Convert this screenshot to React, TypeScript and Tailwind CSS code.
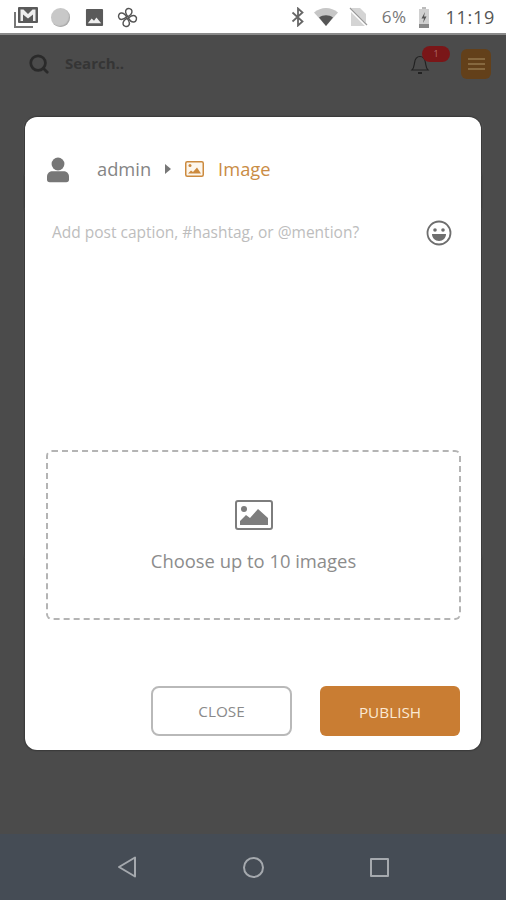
import { Search } from 'lucide-react'

function StatusIcons() {
  return (
    <div className="flex items-center gap-[12px] text-[#555]">
      <svg width="26" height="22" viewBox="0 0 26 22">
        <path d="M2 6v15h18" fill="none" stroke="#777" strokeWidth="2" />
        <rect x="5" y="1" width="20" height="16" rx="1" fill="#5a5a5a" />
        <path d="M7.500 15V3.500h3L15 8l4.500-4.500h3V15H20V8.500L15 12.500l-5-4V15z" fill="#eee" />
      </svg>
      <div className="w-[19px] h-[19px] rounded-full bg-[#c8c8c8] shadow-[inset_-1px_-1px_1px_#aaa]" />
      <svg width="19" height="19" viewBox="0 0 20 20" className="ml-[3px]">
        <rect x="1" y="1" width="18" height="18" rx="1" fill="#5a5a5a" />
        <path d="M3 16l4-5 2.500 2.500L12 10l5 6z" fill="#eee" />
      </svg>
      <svg width="23" height="23" viewBox="0 0 24 24" fill="none" stroke="#555" strokeWidth="1.500" className="rotate-[20deg]">
        <path d="M12 11C9 9 7 7 8 4.500 9 2 13 2 14 4c1 2 0 5-2 7z" />
        <path d="M13 12c2-3 4-5 6.500-4 2.500 1 2.500 5 .5 6-2 1-5 0-7-2z" />
        <path d="M12 13c3 2 5 4 4 6.500-1 2.500-5 2.500-6 .5-1-2 0-5 2-7z" />
        <path d="M11 12c-2 3-4 5-6.500 4C2 15 2 11 4 10c2-1 5 0 7 2z" />
      </svg>
    </div>
  )
}

function StatusRight() {
  return (
    <div className="flex items-center text-[#555]">
      <svg width="14" height="20" viewBox="0 0 14 20" fill="none" stroke="#666" strokeWidth="1.800">
        <path d="M1.500 5.500l10 9L7 18.500v-17l4.500 4-10 9" />
      </svg>
      <svg width="24" height="18" viewBox="0 0 24 18" className="ml-[9px]">
        <path d="M0 4.500C7-1.500 17-1.500 24 4.500L12 18z" fill="#c6c6c6" />
        <path d="M5 9.500c4-3 10-3 14 0L12 18z" fill="#555" />
      </svg>
      <svg width="20" height="20" viewBox="0 0 20 20" className="ml-[10px]">
        <path d="M3 1h9l6 6v12H3z" fill="#d4d4d4" />
        <path d="M1 1l18 18" stroke="#fff" strokeWidth="3" />
        <path d="M2 1l17 17" stroke="#999" strokeWidth="1.300" />
      </svg>
      <span className="ml-[14px] text-[17px] tracking-[0.5px] text-[#777]">6%</span>
      <svg width="12" height="21" viewBox="0 0 12 21" className="ml-[11px]">
        <rect x="4" y="0" width="4" height="2" fill="#bbb" />
        <rect x="1" y="2" width="10" height="19" fill="#d0d0d0" />
        <rect x="1" y="17" width="10" height="4" fill="#888" />
        <path d="M7 5L3.500 11.500H6L5 16l3.500-6.500H6z" fill="#555" />
      </svg>
      <span className="ml-[16px] text-[18px] tracking-[0.7px] text-[#555]">11:19</span>
    </div>
  )
}

export default function App() {
  return (
    <div className="relative w-[506px] h-[900px] flex flex-col overflow-hidden font-['Open_Sans',sans-serif]">
      <div className="h-[35px] shrink-0 bg-white border-b-2 border-[#8a8a8a] flex items-center justify-between pl-[13px] pr-[11px] pt-[1px]">
        <StatusIcons />
        <StatusRight />
      </div>

      {/* page behind the overlay */}
      <div className="flex-1 bg-[#4b4b4b] px-[23px]">
        <div className="flex items-center justify-between h-[57px]">
          <div className="flex items-center">
            <Search size={22} strokeWidth={3} className="text-[#2a2a2a] ml-[5px]" />
            <span className="ml-[15px] text-[15px] font-bold text-[#353535]">Search..</span>
          </div>
          <div className="flex items-center -mr-[8px]">
            <div className="relative mr-[31px] mt-[1px]">
              <svg width="20" height="22" viewBox="0 0 20 22" fill="none" stroke="#222" strokeWidth="1.200">
                <path d="M2 17c2-2 2-4 2.500-7C5 6 7 3.500 10 3.500S15 6 15.500 10c.5 3 .5 5 2.500 7z" />
                <path d="M8 20h4" strokeWidth="2" />
              </svg>
              <div className="absolute -top-[7px] left-[12px] w-[28px] h-[16px] rounded-full bg-[#7a1618] flex items-center justify-center text-[9px] text-[#b06a6a]">
                1
              </div>
            </div>
            <div className="w-[30px] h-[30px] rounded-[6px] bg-[#63401a] flex flex-col items-center justify-center gap-[3px]">
              <div className="w-[17px] h-[2px] bg-[#86683f]" />
              <div className="w-[17px] h-[2px] bg-[#86683f]" />
              <div className="w-[17px] h-[2px] bg-[#86683f]" />
            </div>
          </div>
        </div>
        <div className="mt-[26px] h-[62px] rounded-[8px] border border-[#535353]" />
        <div className="mt-[24px] h-[358px] rounded-[8px] border border-[#535353]" />
      </div>

      <div className="h-[66px] shrink-0 bg-[#454c55] flex items-center pl-[116px]">
        <svg width="22" height="24" viewBox="0 0 22 24" fill="none" stroke="#a5a9ae" strokeWidth="2">
          <path d="M19 2.500v19L3 12z" strokeLinejoin="round" />
        </svg>
        <div className="ml-[105px] w-[21px] h-[21px] rounded-full border-2 border-[#a5a9ae]" />
        <div className="ml-[106px] w-[19px] h-[19px] rounded-[1px] border-2 border-[#a5a9ae]" />
      </div>

      {/* post dialog */}
      <div className="absolute left-[25px] top-[117px] w-[456px] h-[633px] bg-white rounded-[12px] shadow-[0_0_2px_#111] px-[21px] flex flex-col">
        <div className="flex items-center mt-[36px] h-[32px]">
          <svg width="22" height="27" viewBox="0 0 24 28" fill="#777" className="ml-[1px]">
            <circle cx="12" cy="8" r="7" />
            <path d="M3 28c-2 0-3-1-3-3v-3c0-4 3-6 6-6h12c3 0 6 2 6 6v3c0 2-1 3-3 3z" />
          </svg>
          <span className="ml-[28px] text-[18.300px] text-[#858585]">admin</span>
          <svg width="6" height="10" viewBox="0 0 6 10" className="ml-[14px]">
            <path d="M0 0l6 5-6 5z" fill="#777" />
          </svg>
          <svg width="19" height="16" viewBox="0 0 19 16" className="ml-[14px]">
            <rect x="0.750" y="0.750" width="17.500" height="14.500" rx="1.500" fill="#fdf6ec" stroke="#cc8a3e" strokeWidth="1.500" />
            <circle cx="5" cy="4.500" r="1.500" fill="#cc8a3e" />
            <path d="M3 12.500l3-3 2 1.500 4-4.500 4 6z" fill="#cc8a3e" />
          </svg>
          <span className="ml-[14px] text-[18.300px] text-[#c98c45]">Image</span>
        </div>

        <div className="flex items-center justify-between mt-[35px] pl-[6px] pr-[8px]">
          <span className="text-[15.500px] text-[#bdbdbd]">Add post caption, #hashtag, or @mention?</span>
          <svg width="26" height="26" viewBox="0 0 26 26">
            <circle cx="13" cy="13" r="11.500" fill="none" stroke="#6e6e6e" strokeWidth="1.800" />
            <circle cx="9" cy="10" r="1.800" fill="#6e6e6e" />
            <circle cx="17" cy="10" r="1.800" fill="#6e6e6e" />
            <path d="M6 14h14c0 4-3 7-7 7s-7-3-7-7z" fill="#6e6e6e" />
          </svg>
        </div>

        <div className="mt-[204px] h-[170px] w-[415px] shrink-0 rounded-[6px] border-2 border-dashed border-[#b4b4b4] flex flex-col items-center justify-center pt-[5px]">
          <svg width="38" height="30" viewBox="0 0 38 30">
            <rect x="1" y="1" width="36" height="28" rx="2" fill="#fff" stroke="#7d7d7d" strokeWidth="2" />
            <circle cx="9" cy="9" r="3" fill="#7d7d7d" />
            <path d="M5 25v-4l6-6 4 3 8-9 10 9v7z" fill="#7d7d7d" />
          </svg>
          <span className="mt-[17px] text-[18.400px] text-[#8c8c8c]">Choose up to 10 images</span>
        </div>

        <div className="flex justify-end gap-[28px] mt-[66px]">
          <button className="w-[141px] h-[50px] rounded-[8px] border-2 border-[#b9b9b9] bg-white text-[15.300px] text-[#8a8a8a] pt-[1px]">
            CLOSE
          </button>
          <button className="w-[140px] h-[50px] rounded-[6px] bg-[#c97d33] text-[15.300px] text-[#fbe9d3] pt-[2px]">
            PUBLISH
          </button>
        </div>
      </div>
    </div>
  )
}
